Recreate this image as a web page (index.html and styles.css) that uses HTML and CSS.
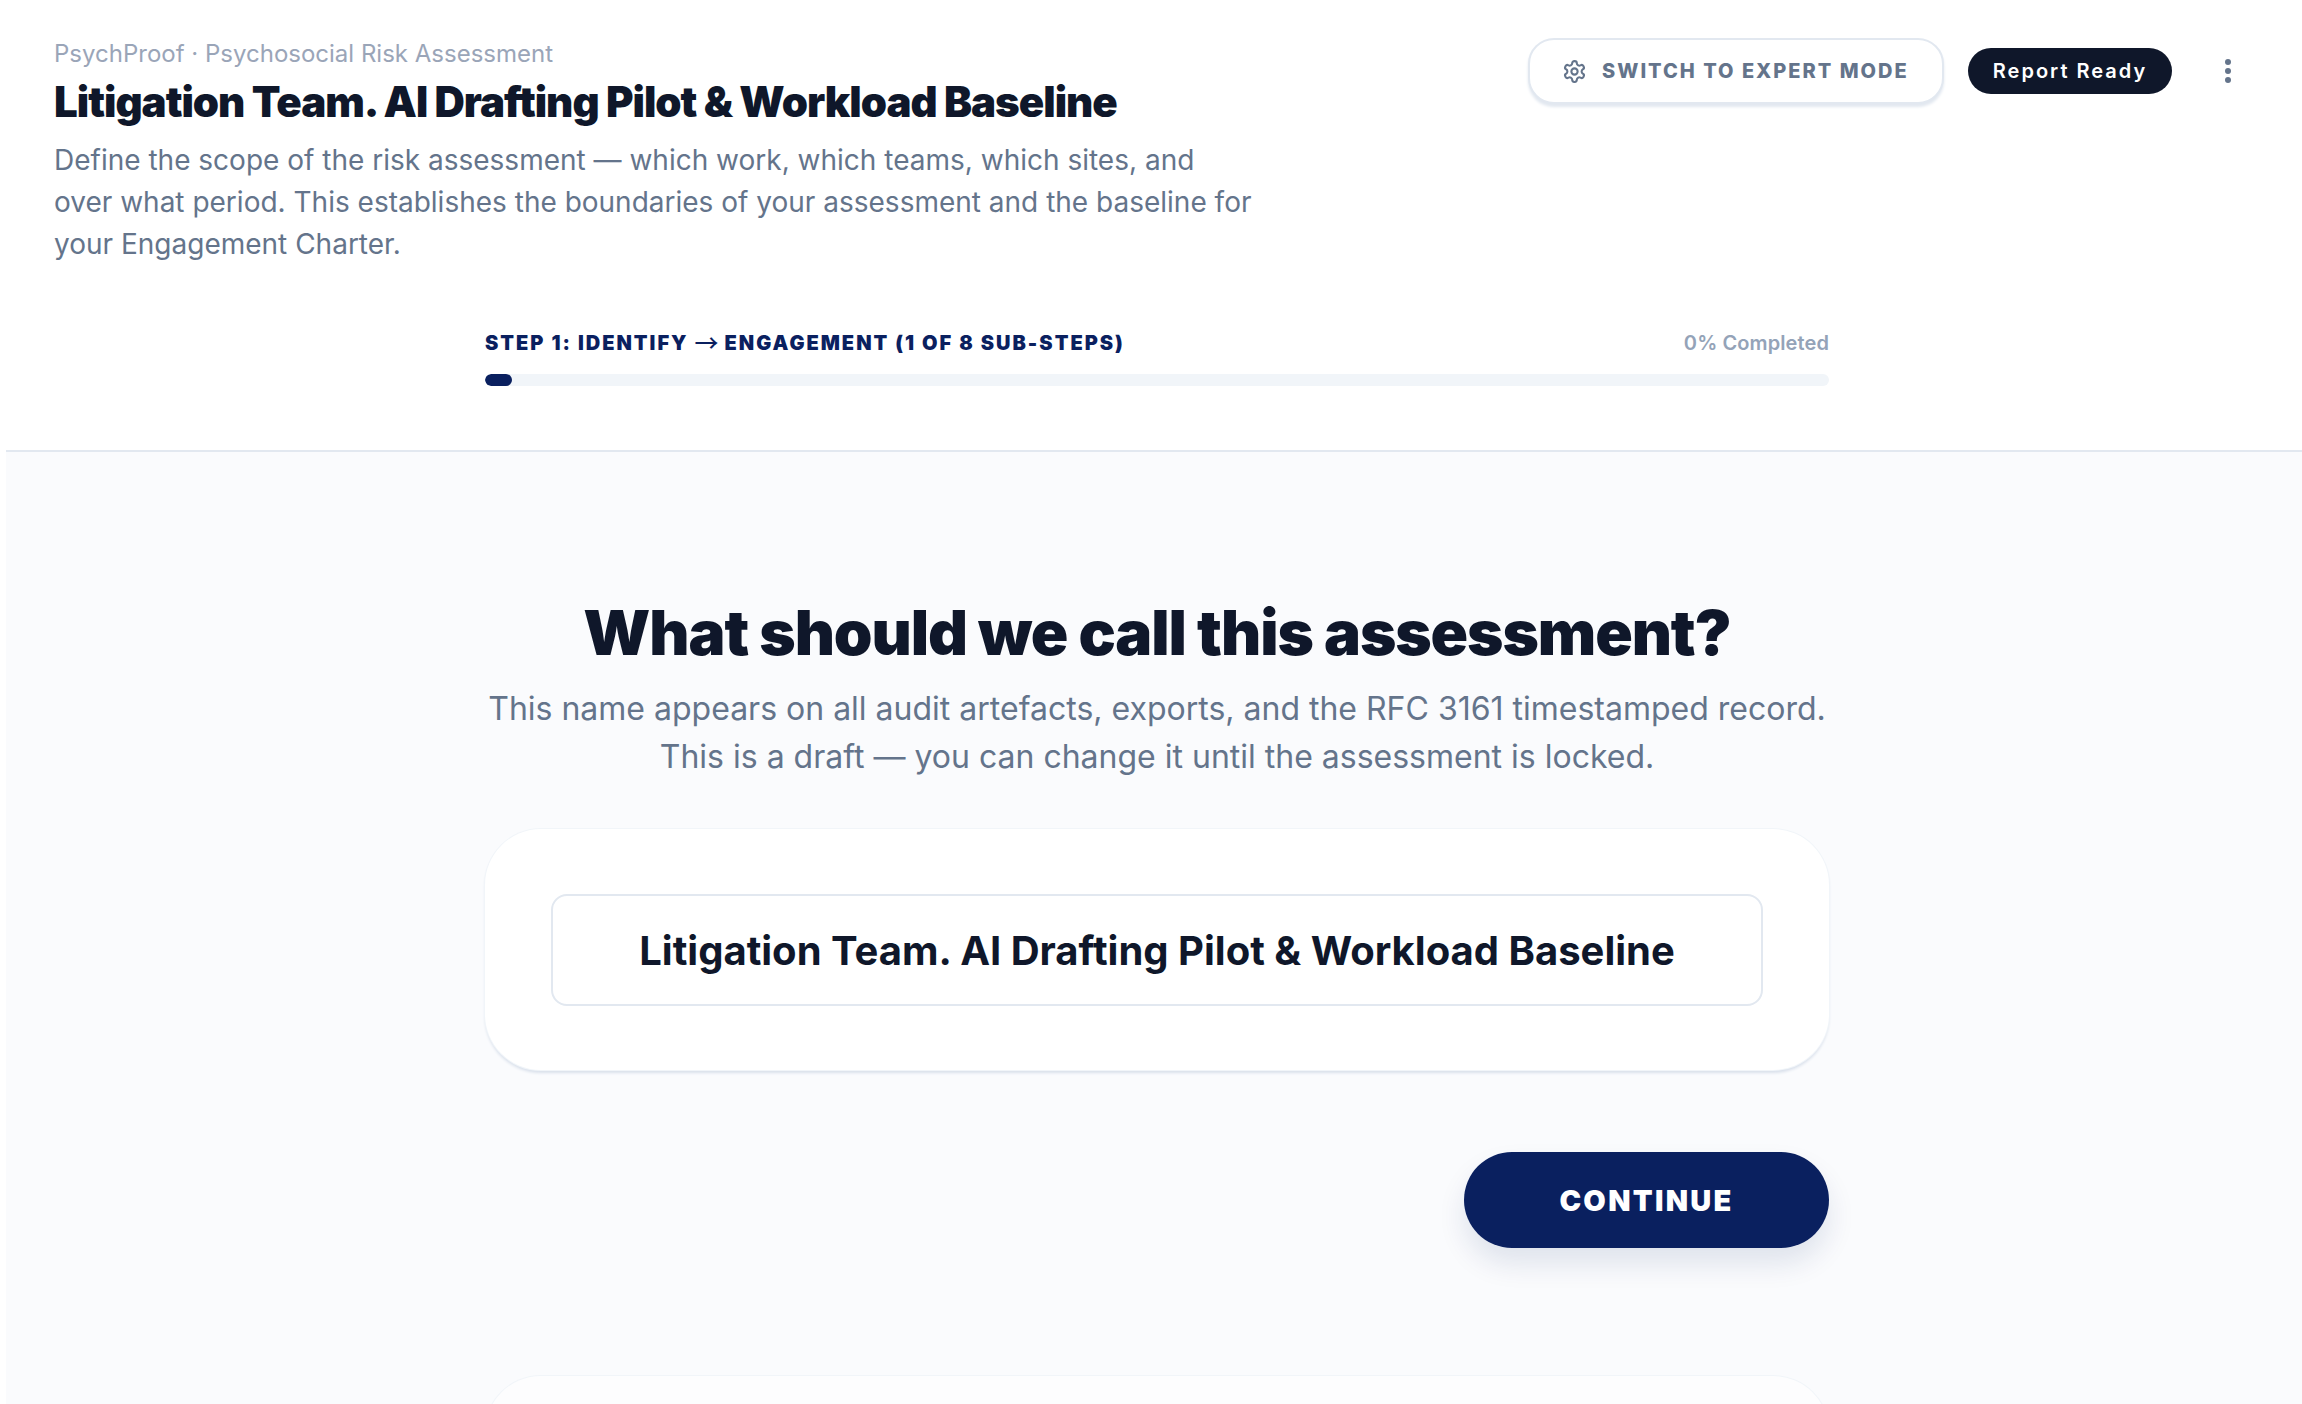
FILE: index.html
```html
<!DOCTYPE html>
<html lang="en">
<head>
<meta charset="utf-8">
<title>PsychProof</title>
<link rel="stylesheet" href="styles.css">
</head>
<body>
<div class="app">
  <header class="header">
    <div class="top">
      <div class="intro">
        <div class="eyebrow">PsychProof · Psychosocial Risk Assessment</div>
        <h1 class="title">Litigation Team. AI Drafting Pilot &amp; Workload Baseline</h1>
        <p class="desc">Define the scope of the risk assessment — which work, which teams, which sites, and over what period. This establishes the boundaries of your assessment and the baseline for your Engagement Charter.</p>
      </div>
      <div class="actions">
        <button class="expert">
          <svg class="gear" viewBox="0 0 24 24" fill="none" stroke="currentColor" stroke-width="2" stroke-linecap="round" stroke-linejoin="round"><path d="M12.22 2h-.44a2 2 0 0 0-2 2v.18a2 2 0 0 1-1 1.73l-.43.25a2 2 0 0 1-2 0l-.15-.08a2 2 0 0 0-2.73.73l-.22.38a2 2 0 0 0 .73 2.73l.15.1a2 2 0 0 1 1 1.72v.51a2 2 0 0 1-1 1.74l-.15.09a2 2 0 0 0-.73 2.73l.22.38a2 2 0 0 0 2.73.73l.15-.08a2 2 0 0 1 2 0l.43.25a2 2 0 0 1 1 1.73V20a2 2 0 0 0 2 2h.44a2 2 0 0 0 2-2v-.18a2 2 0 0 1 1-1.73l.43-.25a2 2 0 0 1 2 0l.15.08a2 2 0 0 0 2.73-.73l.22-.39a2 2 0 0 0-.73-2.73l-.15-.08a2 2 0 0 1-1-1.74v-.5a2 2 0 0 1 1-1.74l.15-.09a2 2 0 0 0 .73-2.73l-.22-.38a2 2 0 0 0-2.73-.73l-.15.08a2 2 0 0 1-2 0l-.43-.25a2 2 0 0 1-1-1.73V4a2 2 0 0 0-2-2z"/><circle cx="12" cy="12" r="3"/></svg>
          <span>SWITCH TO EXPERT MODE</span>
        </button>
        <span class="ready">Report Ready</span>
        <svg class="more" viewBox="0 0 8 26" fill="currentColor"><circle cx="4" cy="4" r="3"/><circle cx="4" cy="13" r="3"/><circle cx="4" cy="22" r="3"/></svg>
      </div>
    </div>
    <div class="progress">
      <div class="progress-labels">
        <span class="step">STEP 1: IDENTIFY <span class="arrow">→</span> ENGAGEMENT (1 OF 8 SUB-STEPS)</span>
        <span class="pct">0% Completed</span>
      </div>
      <div class="track"><div class="fill"></div></div>
    </div>
  </header>
  <main class="main">
    <div class="column">
      <h2 class="question">What should we call this assessment?</h2>
      <p class="hint">This name appears on all audit artefacts, exports, and the RFC 3161 timestamped record.<br>This is a draft — you can change it until the assessment is locked.</p>
      <div class="card">
        <input class="name" type="text" value="Litigation Team. AI Drafting Pilot &amp; Workload Baseline">
      </div>
      <div class="footer-row"><button class="continue">CONTINUE</button></div>
      <div class="next-card"></div>
    </div>
  </main>
</div>
</body>
</html>
```
FILE: styles.css
```css
* { box-sizing: border-box; }
html, body { margin: 0; height: 100%; overflow: hidden; background: #fff; }
body { font-family: Inter, "Liberation Sans", sans-serif; }
.app { margin-left: 6px; height: 1404px; display: flex; flex-direction: column; overflow: hidden; }
.header { flex: none; height: 452px; background: #fff; border-bottom: 2px solid #e2e8f0; padding: 37px 0 0 48px; }
.top { display: flex; justify-content: space-between; align-items: flex-start; }
.intro { width: 1200px; }
.eyebrow { font-size: 24px; line-height: 34px; color: #9aa5b8; }
.title { margin: 4px 0 0; font-size: 42px; line-height: 54px; font-weight: 900; letter-spacing: -1px; color: #0f172a; }
.desc { margin: 10px 0 0; font-size: 28px; line-height: 42px; color: #64748b; }
.actions { display: flex; align-items: center; padding-top: 1px; margin-right: 70px; }
.expert { display: flex; align-items: center; height: 66px; width: 416px; padding: 0 0 0 32px; gap: 15px; background: #fff; border: 2px solid #e2e8f0; border-radius: 26px; box-shadow: 0 3px 3px #e2e8f0; color: #64748b; font: 800 20px Inter, sans-serif; letter-spacing: 2px; }
.gear { width: 25px; height: 25px; flex: none; }
.ready { margin-left: 24px; height: 46px; width: 204px; display: flex; align-items: center; justify-content: center; background: #0f172a; color: #fff; border-radius: 23px; font-size: 20px; font-weight: 600; letter-spacing: 2px; }
.more { width: 8px; height: 26px; margin-left: 52px; color: #64748b; }
.progress { width: 1344px; margin: 65px 0 0 431px; }
.progress-labels { display: flex; justify-content: space-between; align-items: center; height: 26px; }
.step { font-size: 20px; line-height: 24px; font-weight: 900; letter-spacing: 2px; color: #0a205f; }
.arrow { font-family: "Noto Sans CJK SC", sans-serif; font-size: 24px; line-height: 20px; font-weight: 500; letter-spacing: 0; vertical-align: -2px; }
.pct { font-size: 20px; font-weight: 600; letter-spacing: 0.1px; color: #94a3b8; }
.track { margin-top: 18px; height: 12px; border-radius: 6px; background: #f1f5f9; overflow: hidden; }
.fill { width: 27px; height: 12px; border-radius: 6px; background: #0a205f; }
.main { flex: 1; background: #fafbfd; min-height: 0; overflow: hidden; }
.column { width: 1344px; margin-left: 479px; padding-top: 146px; }
.question { margin: 0; text-align: center; font-size: 62px; line-height: 70px; font-weight: 900; letter-spacing: -1.1px; color: #0f172a; }
.hint { margin: 17px 0 0; text-align: center; font-size: 32px; line-height: 48px; color: #64748b; }
.card { margin-top: 48px; height: 241px; padding: 65px 66px 0; background: #fff; border-radius: 56px; box-shadow: 0 0 0 1px #f1f5f9, 0 3px 3px #d9e0eb; }
.name { display: block; width: 100%; height: 112px; text-align: center; border: 2px solid #e2e8f0; border-radius: 16px; background: #fff; font: 700 40px Inter, sans-serif; color: #0f172a; outline: none; }
.footer-row { display: flex; justify-content: flex-end; margin-top: 82px; }
.continue { width: 365px; height: 96px; border: 0; border-radius: 48px; background: #0a205f; color: #fff; font: 900 29px Inter, sans-serif; letter-spacing: 2.3px; box-shadow: 0 16px 28px rgba(10, 32, 96, 0.11); }
.next-card { margin-top: 128px; height: 120px; background: #fdfdfe; border-radius: 56px; box-shadow: 0 0 0 1px #f1f5f9; }
```
